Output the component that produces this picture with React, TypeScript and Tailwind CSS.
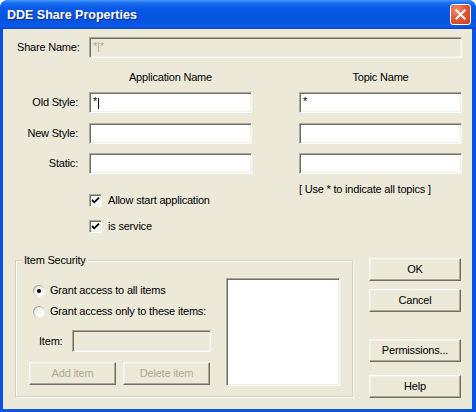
import React from "react";

const sunken =
  "border border-t-[#ACA899] border-l-[#ACA899] border-r-white border-b-white shadow-[inset_1px_1px_0_#716F64,inset_-1px_-1px_0_#F1EFE2]";
const raised =
  "border border-t-white border-l-white border-r-[#716F64] border-b-[#716F64] shadow-[inset_-1px_-1px_0_#ACA899,inset_1px_1px_0_#F1EFE2]";

function Btn({ label, disabled, w, className = "" }: { label: string; disabled?: boolean; w: string; className?: string }) {
  return (
    <div
      className={`${raised} ${w} h-[23px] flex items-center justify-center bg-[#ECE9D8] ${
        disabled ? "text-[#ACA899]" : "text-black"
      } ${className}`}
    >
      {label}
    </div>
  );
}

function CheckBox({ label }: { label: string }) {
  return (
    <div className="flex items-center h-[13px]">
      <div className={`${sunken} w-[13px] h-[13px] bg-[#F7F7F3] flex items-center justify-center`}>
        <svg width="9" height="9" viewBox="0 0 9 9">
          <path d="M1 4 L3.3 6.3 L8 1.6" stroke="#000" strokeWidth="1.8" fill="none" />
        </svg>
      </div>
      <span className="ml-[6px] leading-[13px]">{label}</span>
    </div>
  );
}

function Radio({ label, checked }: { label: string; checked?: boolean }) {
  return (
    <div className="flex items-center h-[13px]">
      <div className="w-[12px] h-[12px] rounded-full bg-[linear-gradient(135deg,#8B887A_0%,#ACA899_30%,#F4F3EE_70%,#FFFFFF_100%)] p-[1px]">
        <div className="w-full h-full rounded-full bg-[linear-gradient(135deg,#D5D2C4_0%,#F5F4EF_40%,#FFFFFF_100%)] flex items-center justify-center">
          {checked && <div className="w-[4px] h-[4px] rounded-full bg-black" />}
        </div>
      </div>
      <span className="ml-[5px] leading-[13px]">{label}</span>
    </div>
  );
}

export default function App() {
  return (
    <div className="w-[476px] h-[412px] flex flex-col bg-[#0856E0] rounded-t-[8px] overflow-hidden font-['Liberation_Sans',Arial,sans-serif] text-[11px] tracking-[-0.2px] text-black">
      {/* Title bar */}
      <div className="h-[29px] shrink-0 flex items-center justify-between pl-[7px] pr-[5px] bg-[linear-gradient(to_bottom,#4A9BFF_0px,#1B6FF2_3px,#0759E6_8px,#0453E1_20px,#0B5AE6_26px,#0845C8_29px)]">
        <span className="text-white font-bold text-[12.5px] [text-shadow:1px_1px_0_#0F2D8A] tracking-[0px] mt-[2px]">
          DDE Share Properties
        </span>
        <div className="w-[21px] h-[21px] rounded-[3px] border border-white bg-[radial-gradient(circle_at_30%_25%,#F08E70_0%,#E05A38_45%,#C8401E_100%)] flex items-center justify-center">
          <svg width="11" height="11" viewBox="0 0 11 11">
            <path d="M1.5 1.5 L9.5 9.5 M9.5 1.5 L1.5 9.5" stroke="#fff" strokeWidth="2" strokeLinecap="square" />
          </svg>
        </div>
      </div>

      {/* Client */}
      <div className="flex-1 ml-[3px] mr-[4px] mb-[3px] bg-[#ECE9D8] flex flex-col">
        {/* Share name */}
        <div className="mt-[8px] flex items-center h-[21px]">
          <div className="w-[86px] pl-[14px]">Share Name:</div>
          <div className={`${sunken} w-[373px] h-[21px] bg-[#ECE9D8] text-[#ACA899] pl-[3px] pt-[2px] leading-[13px]`}>*|*</div>
        </div>

        {/* Headers */}
        <div className="mt-[13px] flex h-[13px] leading-[13px]">
          <div className="w-[86px]" />
          <div className="w-[163px] text-center">Application Name</div>
          <div className="w-[47px]" />
          <div className="w-[163px] text-center">Topic Name</div>
        </div>

        {/* Rows */}
        {[
          { label: "Old Style:", mt: "mt-[8px]", first: true },
          { label: "New Style:", mt: "mt-[10px]", first: false },
          { label: "Static:", mt: "mt-[9px]", first: false },
        ].map((r) => (
          <div key={r.label} className={`${r.mt} flex items-center h-[21px]`}>
            <div className="w-[86px] pr-[11px] text-right">{r.label}</div>
            <div className={`${sunken} w-[163px] h-[21px] bg-white pl-[3px] pt-[2px] leading-[13px] flex items-start`}>
              {r.first && (
                <>
                  <span>*</span>
                  <span className="inline-block w-[1px] h-[11px] bg-black mt-[3px] ml-[1px]" />
                </>
              )}
            </div>
            <div className="w-[47px]" />
            <div className={`${sunken} w-[163px] h-[21px] bg-white pl-[3px] pt-[2px] leading-[13px]`}>
              {r.first ? "*" : ""}
            </div>
          </div>
        ))}

        {/* checkboxes + note */}
        <div className="flex">
          <div className="w-[296px] pl-[86px] pt-[20px] flex flex-col gap-[13px]">
            <CheckBox label="Allow start application" />
            <CheckBox label="is service" />
          </div>
          <div className="pt-[9px] leading-[13px]">[ Use * to indicate all topics ]</div>
        </div>

        {/* Bottom */}
        <div className="mt-[25px] flex">
          <div className="ml-[12px] mt-[2px] w-[338px] h-[137px] border border-[#D0D0BF] shadow-[inset_1px_1px_0_#fff,1px_1px_0_#fff] relative flex">
            <span className="absolute left-[6px] top-[-7px] bg-[#ECE9D8] px-[2px] leading-[13px]">Item Security</span>
            <div className="w-[210px] flex flex-col">
              <div className="mt-[23px] pl-[17px]">
                <Radio label="Grant access to all items" checked />
              </div>
              <div className="mt-[8px] pl-[17px]">
                <Radio label="Grant access only to these items:" />
              </div>
              <div className="mt-[12px] flex items-center h-[22px]">
                <div className="w-[56px] pl-[23px]">Item:</div>
                <div className={`${sunken} w-[139px] h-[22px] bg-[#ECE9D8]`} />
              </div>
              <div className="mt-[10px] flex pl-[13px]">
                <Btn label="Add item" disabled w="w-[87px]" />
                <Btn label="Delete item" disabled w="w-[87px]" className="ml-[7px]" />
              </div>
            </div>
            <div className={`${sunken} mt-[17px] w-[114px] h-[108px] bg-white`} />
          </div>

          <div className="ml-[16px] w-[92px] flex flex-col">
            <Btn label="OK" w="w-[92px]" />
            <Btn label="Cancel" w="w-[92px]" className="mt-[8px]" />
            <Btn label="Permissions..." w="w-[92px]" className="mt-[27px]" />
            <Btn label="Help" w="w-[92px]" className="mt-[13px]" />
          </div>
        </div>
      </div>
    </div>
  );
}
